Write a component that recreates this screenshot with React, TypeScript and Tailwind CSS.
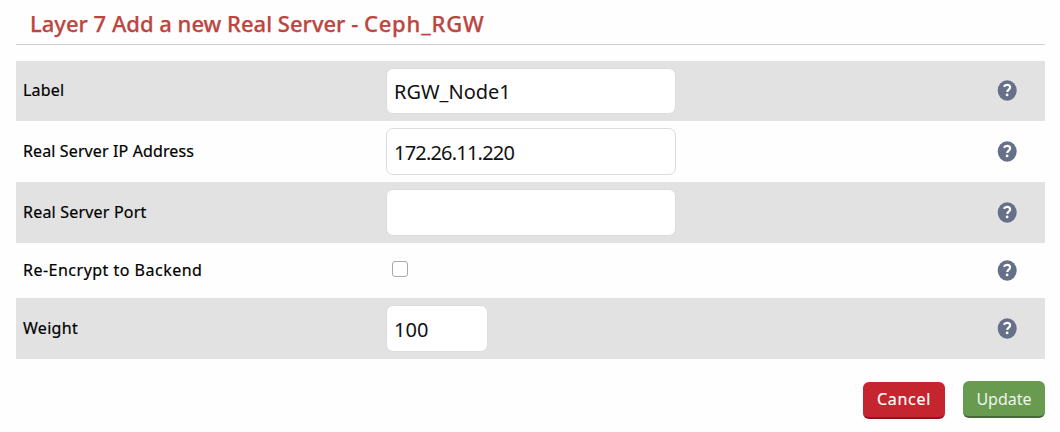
import type { ReactNode } from "react";

function Help() {
  return (
    <span className="mr-[28px] ml-auto flex h-[21px] w-[20px] items-center justify-center">
      <svg viewBox="0 0 20 21" width="20" height="21" aria-label="Help">
        <ellipse cx="10.2" cy="10.5" rx="9.5" ry="10.3" fill="#667089" />
        <path d="M6.9 6.8C7.5 5.5 8.6 4.9 10.1 4.9c1.8 0 3 .9 3 2.5 0 2.1-2.8 2.3-2.8 4.5" fill="none" stroke="#fff" strokeWidth="2.2" />
        <circle cx="10.1" cy="14.9" r="1.4" fill="#fff" />
      </svg>
    </span>
  );
}

function Row({ label, className, labelClass, children }: { label: string; className: string; labelClass: string; children: ReactNode }) {
  return (
    <div className={`flex items-center pl-[7px] ${className}`}>
      <label className={`w-[363px] shrink-0 pb-[2px] text-[16px] leading-6 whitespace-nowrap text-black [-webkit-text-stroke:0.2px_black] ${labelClass}`}>{label}</label>
      {children}
      <Help />
    </div>
  );
}

const input = "rounded-[7px] border border-[#dcdcdc] bg-white px-[7px] text-[20px] text-[#111] outline-none";

export default function App() {
  return (
    <main className="h-[432px] w-[1060px] overflow-hidden bg-[#fefefe] pr-[15px] pl-4 font-['Noto_Sans',sans-serif]">
      <h1 className="h-[45px] border-b border-[#cfcfcf] pt-[7px] pl-[14px] text-[22px] leading-[32px] font-medium whitespace-nowrap text-[#bd4540] [-webkit-text-stroke:0.25px_#bd4540]">
        Layer 7 Add a new Real Server - <span className="tracking-[0.8px]">Ceph_RGW</span>
      </h1>
      <form className="mt-4">
        <Row label="Label" className="h-[60px] bg-[#e2e2e2] pb-px" labelClass="pb-px tracking-[0.2px]">
          <input className={`mt-px h-[46px] w-[290px] ${input}`} defaultValue="RGW_Node1" />
        </Row>
        <Row label="Real Server IP Address" className="h-[61px]" labelClass="tracking-[0.12px]">
          <input className={`h-[47px] w-[290px] pt-[2px] tracking-[-0.8px] ${input}`} defaultValue="172.26.11.220" />
        </Row>
        <Row label="Real Server Port" className="h-[61px] bg-[#e2e2e2]" labelClass="tracking-[0.2px]">
          <input className={`h-[47px] w-[290px] ${input}`} />
        </Row>
        <Row label="Re-Encrypt to Backend" className="h-[55px]" labelClass="tracking-[0.49px]">
          <input type="checkbox" className="mb-[3px] ml-[6px] size-4 appearance-none rounded-[3px] border border-[#aaa] bg-white" />
        </Row>
        <Row label="Weight" className="h-[61px] bg-[#e2e2e2]" labelClass="tracking-[0.3px]">
          <input className={`h-[47px] w-[102px] pt-[2px] ${input}`} defaultValue="100" />
        </Row>
        <div className="mt-[22px] flex justify-end gap-[18px] text-[16px] text-white">
          <button type="button" className="mt-px h-[37px] w-[82px] rounded-[6px] border-b-2 border-[#85181f] bg-[#c4252e] pb-[2px] tracking-[0.7px] [-webkit-text-stroke:0.2px_white]">Cancel</button>
          <button type="button" className="h-[37px] w-[82px] rounded-[6px] border-b-2 border-[#47693a] bg-[#689b50] text-[#f0f5ed]">Update</button>
        </div>
      </form>
    </main>
  );
}
